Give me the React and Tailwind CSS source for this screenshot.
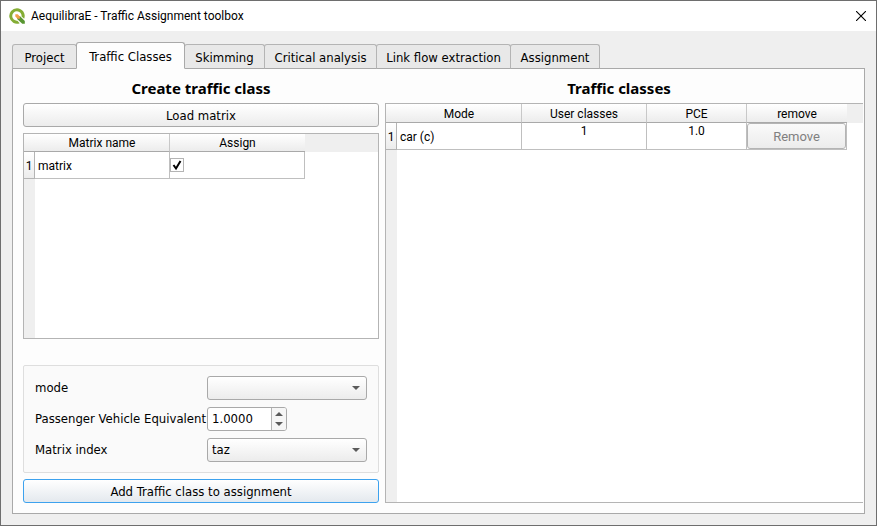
import { useState } from "react";

const TABS = [
  { name: "Project", width: "w-[65px]" },
  { name: "Traffic Classes", width: "w-[109px]" },
  { name: "Skimming", width: "w-[81px]" },
  { name: "Critical analysis", width: "w-[113px]" },
  { name: "Link flow extraction", width: "w-[135px]" },
  { name: "Assignment", width: "w-[90px]" },
];

const HEAD =
  "border-b border-[#a9a9a9] bg-linear-to-b from-white to-[#ececec] p-0 pt-px text-center font-normal";
const CELL = "border-r border-b border-[#bfbfbf] bg-white p-0";
const TEXT_CELL = "border-r border-b border-[#bfbfbf] bg-white p-0 pt-[2px] pl-[3px]";
const ROW_HEAD =
  "border-r border-b border-[#b4b4b4] bg-linear-to-b from-white to-[#ececec] p-0 pt-[2px] text-center font-normal";
const BUTTON =
  "h-6 w-full rounded-[3px] border bg-linear-to-b pt-px text-center text-[13px] leading-4";
const TABLE =
  "w-full table-fixed border-separate border-spacing-0 font-[Roboto,sans-serif] text-xs leading-4";
const TITLE =
  "mb-[5px] text-center font-['Noto_Sans',sans-serif] text-[15px] leading-5 font-bold";

function Logo() {
  return (
    <svg width="16" height="16" viewBox="0 0 16 16" aria-hidden="true">
      <path
        d="M8 0.3a7.7 7.7 0 1 0 2.7 14.9l-2.3-2.5a4.7 4.7 0 1 1 4.2-4.3l2.6 2.3A7.7 7.7 0 0 0 8 0.3Z"
        fill="#84ad35"
      />
      <path d="M8.2 8.2h2.9l4.7 4.7v2.9h-2.6L8.2 11Z" fill="#589632" />
      <path d="M6.3 6.3h2.4l2.2 2.2v2.3H8.6L6.3 8.6Z" fill="#f0a04b" />
    </svg>
  );
}

function Arrow({ up }) {
  return (
    <svg width="8" height="4" viewBox="0 0 8 4" aria-hidden="true">
      <path d={up ? "M0 4 4 0 8 4Z" : "M0 0h8L4 4Z"} fill="#5a5a5a" />
    </svg>
  );
}

function Combo({ id, value }) {
  return (
    <div className="relative w-40">
      <select
        id={id}
        defaultValue={value}
        className="block h-6 w-full appearance-none rounded-[3px] border border-[#a9a9a9] bg-linear-to-b from-white to-[#ececec] px-1 text-[13px] leading-4 outline-none"
      >
        <option value={value}>{value}</option>
      </select>
      <span className="pointer-events-none absolute inset-y-0 right-[7px] flex items-center">
        <Arrow />
      </span>
    </div>
  );
}

function MatrixTable() {
  return (
    <div className="flex min-h-[206px] flex-1 flex-col border border-[#b4b4b4] bg-white">
      <table className={TABLE}>
        <colgroup>
          <col className="w-[11px]" />
          <col className="w-[135px]" />
          <col className="w-[135px]" />
          <col />
        </colgroup>
        <thead>
          <tr className="h-[18px]">
            <td className={HEAD}></td>
            <th scope="col" className={`${HEAD} border-r border-r-[#c8c8c8]`}>Matrix name</th>
            <th scope="col" className={HEAD}>Assign</th>
            <td className="bg-[#efefef] p-0"></td>
          </tr>
        </thead>
        <tbody>
          <tr className="h-[27px]">
            <th scope="row" className={ROW_HEAD}>1</th>
            <td className={TEXT_CELL}>matrix</td>
            <td className={CELL}>
              <span className="relative block size-[14px]">
                <input
                  type="checkbox"
                  aria-label="Assign matrix"
                  defaultChecked
                  className="peer block size-[14px] appearance-none border border-[#b4b4b4] bg-white"
                />
                <svg
                  className="pointer-events-none invisible absolute inset-0 peer-checked:visible"
                  width="14"
                  height="14"
                  viewBox="0 0 14 14"
                  aria-hidden="true"
                >
                  <path d="M3.5 7 6 10.5 10.5 3" fill="none" stroke="#000" strokeWidth="2" />
                </svg>
              </span>
            </td>
            <td className="p-0"></td>
          </tr>
        </tbody>
      </table>
      <div className="w-[11px] flex-1 bg-[#efefef]" />
    </div>
  );
}

function ClassesTable() {
  return (
    <div className="flex flex-1 flex-col border-y border-l border-[#b4b4b4] bg-white">
      <table className={TABLE}>
        <colgroup>
          <col className="w-[11px]" />
          <col className="w-[125px]" />
          <col className="w-[125px]" />
          <col className="w-[100px]" />
          <col className="w-[100px]" />
          <col />
        </colgroup>
        <thead>
          <tr className="h-[19px]">
            <td className={HEAD}></td>
            <th scope="col" className={`${HEAD} border-r border-r-[#c8c8c8]`}>Mode</th>
            <th scope="col" className={`${HEAD} border-r border-r-[#c8c8c8]`}>User classes</th>
            <th scope="col" className={`${HEAD} border-r border-r-[#c8c8c8]`}>PCE</th>
            <th scope="col" className={HEAD}>remove</th>
            <td className="bg-[#efefef] p-0"></td>
          </tr>
        </thead>
        <tbody>
          <tr className="h-[27px]">
            <th scope="row" className={ROW_HEAD}>1</th>
            <td className={TEXT_CELL}>car (c)</td>
            <td className={`${CELL} text-center align-top`}>1</td>
            <td className={`${CELL} text-center align-top`}>1.0</td>
            <td className={CELL}>
              <button
                type="button"
                disabled
                className="block h-[26px] w-full rounded-[3px] border border-[#b4b4b4] bg-linear-to-b from-[#fafafa] to-[#ececec] pt-px text-[13px] leading-4 text-[#808080]"
              >
                Remove
              </button>
            </td>
            <td className="p-0"></td>
          </tr>
        </tbody>
      </table>
      <div className="w-[11px] flex-1 bg-[#efefef]" />
    </div>
  );
}

export default function App() {
  const [active, setActive] = useState("Traffic Classes");
  const [pce, setPce] = useState(1);

  return (
    <div className="flex min-h-screen flex-col border border-[#6e6e6e] bg-[#efefef] font-['DejaVu_Sans_Condensed','DejaVu_Sans',sans-serif] text-[13px] leading-4 text-black">
      <header className="flex h-[30px] items-center gap-[6px] bg-white pr-[10px] pl-2">
        <Logo />
        <h1 className="flex-1 font-[Roboto,sans-serif] text-xs">
          AequilibraE - Traffic Assignment toolbox
        </h1>
        <button type="button" aria-label="Close">
          <svg width="10" height="10" viewBox="0 0 10 10" aria-hidden="true">
            <path d="M0 0 10 10M10 0 0 10" stroke="#000" strokeWidth="1.1" />
          </svg>
        </button>
      </header>

      <main className="flex flex-1 flex-col px-[11px] pt-[11px] pb-[11px]">
        <div role="tablist" className="z-10 -mb-px flex items-end">
          {TABS.map(({ name, width }) => (
            <button
              key={name}
              type="button"
              role="tab"
              aria-selected={active === name}
              onClick={() => setActive(name)}
              className={`${width} -mr-px shrink-0 rounded-t-[3px] border pt-[2px] whitespace-nowrap ${
                active === name
                  ? "z-10 h-[27px] border-[#a9a9a9] border-b-[#fdfdfd] bg-[#fdfdfd]"
                  : "h-[25px] border-[#b4b4b4] border-b-[#a9a9a9] bg-[#e8e8e8]"
              }`}
            >
              {name}
            </button>
          ))}
        </div>

        <section className="flex flex-1 gap-[6px] border border-[#a9a9a9] bg-[#fdfdfd] pt-[9px] pr-px pb-[10px] pl-[10px]">
          <div className="flex w-[356px] shrink-0 flex-col">
            <h2 className={TITLE}>Create traffic class</h2>
            <button type="button" className={`${BUTTON} mb-[6px] border-[#a9a9a9] from-white to-[#ececec]`}>
              Load matrix
            </button>
            <MatrixTable />
            <form className="mt-[26px] mb-[6px] grid grid-cols-[172px_1fr] items-center gap-y-[7px] rounded-[2px] border border-[#dedede] bg-[#fafafa] py-[10px] pl-[11px]">
              <label htmlFor="mode">mode</label>
              <Combo id="mode" value="" />
              <label htmlFor="pce" className="whitespace-nowrap">Passenger Vehicle Equivalent</label>
              <div className="flex h-6 w-20 overflow-hidden rounded-[3px] border border-[#a9a9a9] bg-white">
                <input
                  id="pce"
                  type="text"
                  value={pce.toFixed(4)}
                  readOnly
                  className="min-w-0 flex-1 pl-1 outline-none"
                />
                <div className="flex w-[15px] flex-col border-l border-[#b4b4b4] bg-[#f6f6f6] py-px">
                  <button type="button" aria-label="Increase" onClick={() => setPce(pce + 1)} className="flex flex-1 items-center justify-center">
                    <Arrow up />
                  </button>
                  <button type="button" aria-label="Decrease" onClick={() => setPce(pce - 1)} className="flex flex-1 items-center justify-center">
                    <Arrow />
                  </button>
                </div>
              </div>
              <label htmlFor="matrix-index">Matrix index</label>
              <Combo id="matrix-index" value="taz" />
            </form>
            <button type="button" className={`${BUTTON} border-[#3da2ee] from-white to-[#e4e9ee]`}>
              Add Traffic class to assignment
            </button>
          </div>

          <div className="flex min-w-0 flex-1 flex-col">
            <h2 className={`${TITLE} pr-[10px]`}>Traffic classes</h2>
            <ClassesTable />
          </div>
        </section>
      </main>
    </div>
  );
}
